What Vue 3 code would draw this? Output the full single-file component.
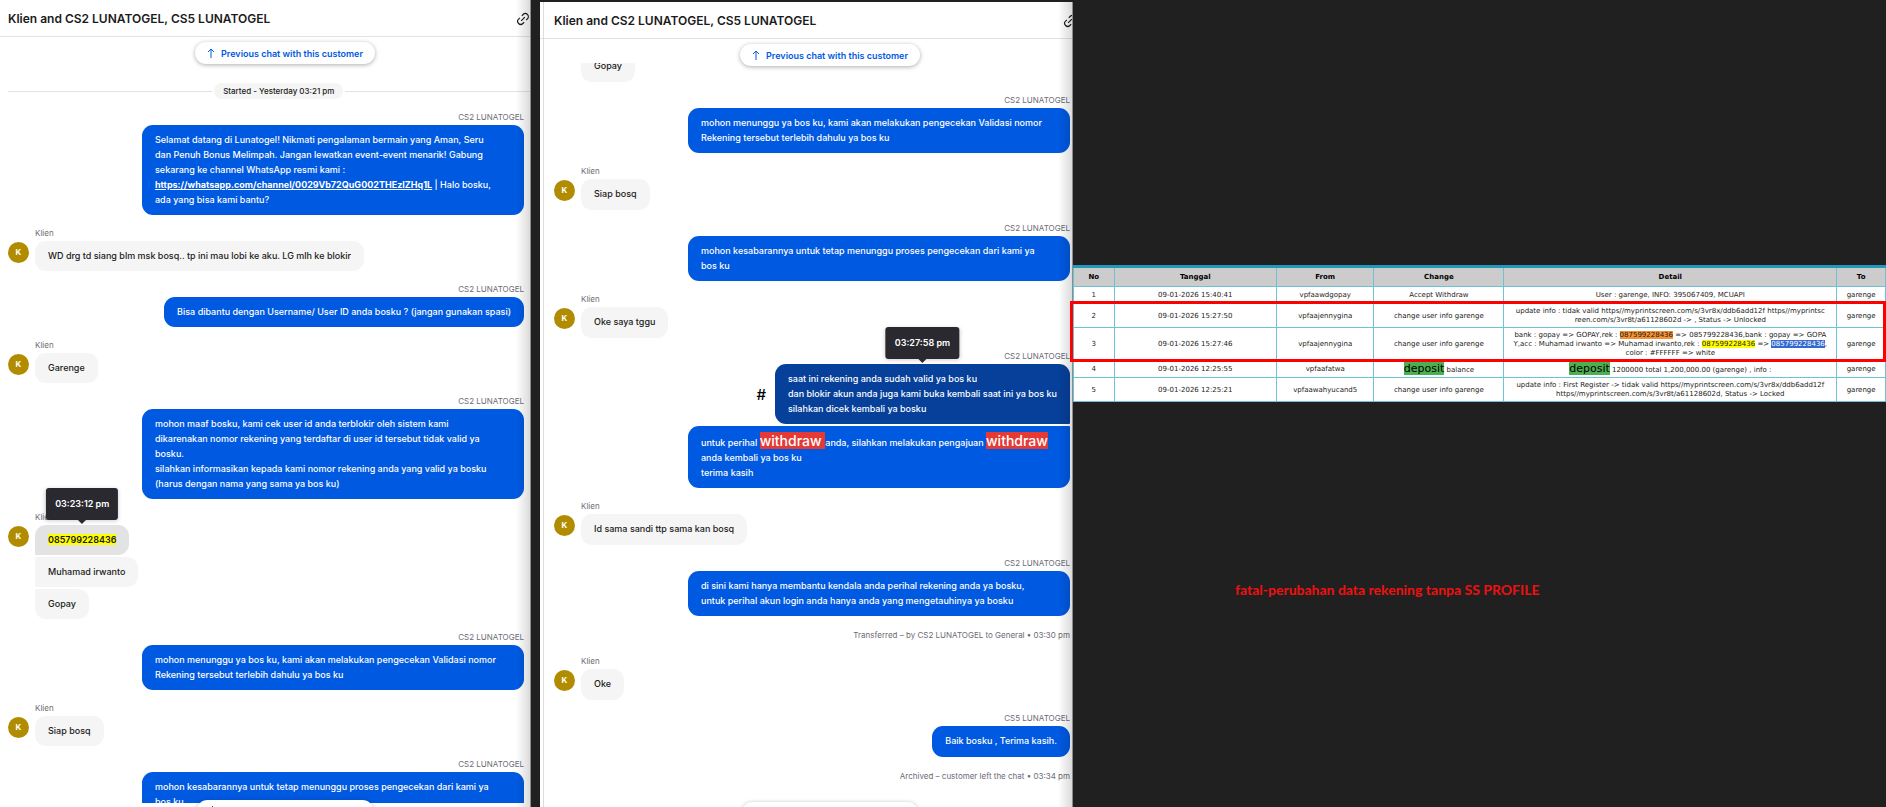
<script setup>
const conversations = [
  {
    id: 'left',
    title: 'Klien and CS2 LUNATOGEL, CS5 LUNATOGEL',
    started: 'Started - Yesterday 03:21 pm',
    items: [
      {
        from: 'agent',
        name: 'CS2 LUNATOGEL',
        bubbles: [
          {
            wide: true,
            parts: [
              { text: 'Selamat datang di Lunatogel! Nikmati pengalaman bermain yang Aman, Seru\ndan Penuh Bonus Melimpah. Jangan lewatkan event-event menarik! Gabung\nsekarang ke channel WhatsApp resmi kami :\n' },
              { text: 'https://whatsapp.com/channel/0029Vb72QuG002THEzIZHq1L', link: true },
              { text: ' | Halo bosku,\nada yang bisa kami bantu?' },
            ],
          },
        ],
      },
      { from: 'client', name: 'Klien', bubbles: [{ parts: [{ text: 'WD drg td siang blm msk bosq.. tp ini mau lobi ke aku. LG mlh ke blokir' }] }] },
      { from: 'agent', name: 'CS2 LUNATOGEL', bubbles: [{ parts: [{ text: 'Bisa dibantu dengan Username/ User ID anda bosku ? (jangan gunakan spasi)' }] }] },
      { from: 'client', name: 'Klien', bubbles: [{ parts: [{ text: 'Garenge' }] }] },
      {
        from: 'agent',
        name: 'CS2 LUNATOGEL',
        bubbles: [
          {
            wide: true,
            parts: [
              { text: 'mohon maaf bosku, kami cek user id anda terblokir oleh sistem kami\ndikarenakan nomor rekening yang terdaftar di user id tersebut tidak valid ya bosku.\nsilahkan informasikan kepada kami nomor rekening anda yang valid ya bosku (harus dengan nama yang sama ya bos ku)' },
            ],
          },
        ],
      },
      {
        from: 'client',
        name: 'Klien',
        bubbles: [
          { active: true, time: '03:23:12 pm', parts: [{ text: '085799228436', mark: 'number' }] },
          { parts: [{ text: 'Muhamad irwanto' }] },
          { parts: [{ text: 'Gopay' }] },
        ],
      },
      { from: 'agent', name: 'CS2 LUNATOGEL', bubbles: [{ wide: true, parts: [{ text: 'mohon menunggu ya bos ku, kami akan melakukan pengecekan Validasi nomor Rekening tersebut terlebih dahulu ya bos ku' }] }] },
      { from: 'client', name: 'Klien', bubbles: [{ parts: [{ text: 'Siap bosq' }] }] },
      { from: 'agent', name: 'CS2 LUNATOGEL', bubbles: [{ wide: true, parts: [{ text: 'mohon kesabarannya untuk tetap menunggu proses pengecekan dari kami ya bos ku' }] }] },
    ],
  },
  {
    id: 'right',
    title: 'Klien and CS2 LUNATOGEL, CS5 LUNATOGEL',
    items: [
      { from: 'client', cut: true, bubbles: [{ parts: [{ text: 'Gopay' }] }] },
      { from: 'agent', name: 'CS2 LUNATOGEL', bubbles: [{ wide: true, parts: [{ text: 'mohon menunggu ya bos ku, kami akan melakukan pengecekan Validasi nomor Rekening tersebut terlebih dahulu ya bos ku' }] }] },
      { from: 'client', name: 'Klien', bubbles: [{ parts: [{ text: 'Siap bosq' }] }] },
      { from: 'agent', name: 'CS2 LUNATOGEL', bubbles: [{ wide: true, parts: [{ text: 'mohon kesabarannya untuk tetap menunggu proses pengecekan dari kami ya bos ku' }] }] },
      { from: 'client', name: 'Klien', bubbles: [{ parts: [{ text: 'Oke saya tggu' }] }] },
      {
        from: 'agent',
        name: 'CS2 LUNATOGEL',
        bubbles: [
          {
            active: true,
            time: '03:27:58 pm',
            parts: [{ text: 'saat ini rekening anda sudah valid ya bos ku\ndan blokir akun anda juga kami buka kembali saat ini ya bos ku\nsilahkan dicek kembali ya bosku' }],
          },
          {
            wide: true,
            parts: [
              { text: 'untuk perihal ' },
              { text: 'withdraw ', mark: 'withdraw' },
              { text: 'anda, silahkan melakukan pengajuan ' },
              { text: 'withdraw', mark: 'withdraw' },
              { text: ' anda kembali ya bos ku\nterima kasih' },
            ],
          },
        ],
      },
      { from: 'client', name: 'Klien', bubbles: [{ parts: [{ text: 'Id sama sandi ttp sama kan bosq' }] }] },
      { from: 'agent', name: 'CS2 LUNATOGEL', bubbles: [{ wide: true, parts: [{ text: 'di sini kami hanya membantu kendala anda perihal rekening anda ya bosku,\nuntuk perihal akun login anda hanya anda yang mengetauhinya ya bosku' }] }] },
      { event: 'Transferred – by CS2 LUNATOGEL to General • 03:30 pm' },
      { from: 'client', name: 'Klien', bubbles: [{ parts: [{ text: 'Oke' }] }] },
      { from: 'agent', name: 'CS5 LUNATOGEL', bubbles: [{ parts: [{ text: 'Baik bosku , Terima kasih.' }] }] },
      { event: 'Archived – customer left the chat • 03:34 pm' },
    ],
  },
]

const columns = ['No', 'Tanggal', 'From', 'Change', 'Detail', 'To']

const rows = [
  {
    date: '09-01-2026 15:40:41',
    from: 'vpfaawdgopay',
    change: [{ text: 'Accept Withdraw' }],
    detail: [{ text: 'User : garenge, INFO: 395067409, MCUAPI' }],
  },
  {
    date: '09-01-2026 15:27:50',
    from: 'vpfaajennygina',
    change: [{ text: 'change user info garenge' }],
    detail: [{ text: 'update info : tidak valid https//myprintscreen.com/s/3vr8x/ddb6add12f https//myprintsc\nreen.com/s/3vr8t/a61128602d -> , Status -> Unlocked' }],
  },
  {
    date: '09-01-2026 15:27:46',
    from: 'vpfaajennygina',
    change: [{ text: 'change user info garenge' }],
    detail: [
      { text: 'bank : gopay => GOPAY,rek : ' },
      { text: '087599228436', mark: 'orange' },
      { text: ' => 085799228436,bank : gopay => GOPA\nY,acc : Muhamad irwanto => Muhamad irwanto,rek : ' },
      { text: '087599228436', mark: 'yellow' },
      { text: ' => ' },
      { text: '085799228436', mark: 'blue' },
      { text: ',\ncolor : #FFFFFF => white' },
    ],
  },
  {
    date: '09-01-2026 12:25:55',
    from: 'vpfaafatwa',
    change: [{ text: 'deposit', mark: 'deposit' }, { text: ' balance' }],
    detail: [{ text: 'deposit', mark: 'deposit' }, { text: ' 1200000 total 1,200,000.00 (garenge) , info :' }],
  },
  {
    date: '09-01-2026 12:25:21',
    from: 'vpfaawahyucand5',
    change: [{ text: 'change user info garenge' }],
    detail: [{ text: 'update info : First Register -> tidak valid https//myprintscreen.com/s/3vr8x/ddb6add12f\nhttps//myprintscreen.com/s/3vr8t/a61128602d, Status -> Locked' }],
  },
]
</script>

<template>
  <main class="board">
    <section v-for="chat in conversations" :key="chat.id" class="chat" :class="`chat--${chat.id}`">
      <header class="chat__header">
        <h1 class="chat__title">{{ chat.title }}</h1>
        <button class="chat__copy" type="button" aria-label="Copy link">
          <svg viewBox="0 0 24 24" width="14" height="14" fill="none" stroke="currentColor" stroke-width="2">
            <path d="M10 6.5l2.2-2.2a5.2 5.2 0 0 1 7.4 7.4L17.4 14M14 17.5l-2.2 2.2a5.2 5.2 0 0 1-7.4-7.4L6.600 10M8.800 15.200l6.400-6.400" />
          </svg>
        </button>
      </header>

      <button class="jump jump--top" type="button">
        <svg viewBox="0 0 8 10" width="8" height="10" fill="none" stroke="currentColor">
          <path d="M4 10V1M1 4l3-3 3 3" />
        </svg>
        Previous chat with this customer
      </button>

      <div class="chat__feed">
        <div v-if="chat.started" class="started"><span class="started__label">{{ chat.started }}</span></div>
        <template v-for="(item, i) in chat.items" :key="i">
          <p v-if="item.event" class="event">{{ item.event }}</p>
          <article v-else class="group" :class="[`group--${item.from}`, { 'group--cut': item.cut }]">
            <div v-if="item.name" class="group__name">{{ item.name }}</div>
            <div class="group__row">
              <span v-if="item.name" class="avatar">{{ item.from === 'client' ? 'K' : '' }}</span>
              <div class="group__bubbles">
                <div v-for="(bubble, b) in item.bubbles" :key="b" class="line">
                  <button v-if="bubble.active && item.from === 'agent'" class="line__tag" type="button" aria-label="Tag message">#</button>
                  <div class="bubble" :class="{ 'bubble--active': bubble.active, 'bubble--wide': bubble.wide }">
                    <template v-for="(part, p) in bubble.parts" :key="p"><a v-if="part.link" class="bubble__link" :href="part.text">{{ part.text }}</a><mark v-else-if="part.mark" :class="`mark--${part.mark}`">{{ part.text }}</mark><template v-else>{{ part.text }}</template></template>
                    <span v-if="bubble.time" class="tooltip">{{ bubble.time }}</span>
                  </div>
                </div>
              </div>
            </div>
          </article>
        </template>
      </div>

      <button class="jump jump--bottom" type="button" aria-label="Next chat with this customer">
        <svg viewBox="0 0 8 10" width="8" height="10" fill="none" stroke="currentColor">
          <path d="M4 0v9M1 6l3 3 3-3" />
        </svg>
      </button>
    </section>

    <section class="report">
      <div class="report__table">
        <table class="log">
          <thead>
            <tr>
              <th v-for="col in columns" :key="col" :class="`log__${col.toLowerCase()}`">{{ col }}</th>
            </tr>
          </thead>
          <tbody>
            <tr v-for="(row, r) in rows" :key="r">
              <td>{{ r + 1 }}</td>
              <td>{{ row.date }}</td>
              <td>{{ row.from }}</td>
              <td class="log__text"><template v-for="(part, p) in row.change" :key="p"><mark v-if="part.mark" :class="`mark--${part.mark}`">{{ part.text }}</mark><template v-else>{{ part.text }}</template></template></td>
              <td class="log__text"><template v-for="(part, p) in row.detail" :key="p"><mark v-if="part.mark" :class="`mark--${part.mark}`">{{ part.text }}</mark><template v-else>{{ part.text }}</template></template></td>
              <td>garenge</td>
            </tr>
          </tbody>
        </table>
        <div class="report__frame"></div>
      </div>
      <p class="report__note">fatal-perubahan data rekening tanpa SS PROFILE</p>
    </section>
  </main>
</template>

<style>
body {
  background: #202020;
}
</style>

<style scoped>
.board {
  display: flex;
  height: 100vh;
  overflow: hidden;
  background: #202020;
  font-family: Inter, "Liberation Sans", sans-serif;
  font-size: 9px;
  font-weight: 500;
  line-height: 15px;
  color: #1b1b20;
}

button {
  font: inherit;
  border: 0;
  padding: 0;
  background: none;
  cursor: pointer;
}

mark {
  color: inherit;
}

.chat {
  position: relative;
  display: flex;
  flex-direction: column;
  overflow: hidden;
  background: #fff;
}

.chat::after {
  content: "";
  position: absolute;
  inset: 0 0 0 auto;
  width: 14px;
  border-right: 1px solid #8c8c8c;
  background: linear-gradient(to right, transparent, rgba(0, 0, 0, 0.14));
  pointer-events: none;
}

.chat--left {
  flex: 531 0 0;
  margin-right: 9px;
}

.chat--right {
  flex: 533 0 0;
  margin-top: 2px;
}

.chat--right::before {
  content: "";
  position: absolute;
  inset: 0 auto 0 3px;
  width: 1px;
  background: #dcdcde;
}

.chat__header {
  display: flex;
  flex: none;
  align-items: center;
  justify-content: space-between;
  height: 35px;
  padding: 1px 0 0 8px;
  border-bottom: 1px solid #e2e2e4;
}

.chat--right .chat__header {
  padding-left: 14px;
}

.chat__title {
  margin: 0;
  font-size: 12px;
  font-weight: 600;
  line-height: 18px;
  white-space: nowrap;
}

.chat__copy {
  display: flex;
  flex: none;
  margin-right: 1px;
  color: #1b1b20;
}

.chat--right .chat__copy {
  margin-right: -4px;
}

.jump {
  position: absolute;
  z-index: 1;
  left: 285px;
  display: flex;
  align-items: center;
  height: 22px;
  padding: 0 12px;
  gap: 6px;
  transform: translateX(-50%);
  border-radius: 11px;
  background: #fff;
  box-shadow: 0 1px 4px rgba(19, 19, 23, 0.35);
  color: #0059e1;
  font-weight: 600;
  white-space: nowrap;
}

.chat--right .jump {
  left: 290px;
}

.jump--top {
  top: 42px;
}

.jump--bottom {
  top: calc(100vh - 7px);
  width: 177px;
}

.chat__feed {
  flex: 1;
  min-height: 0;
  margin-bottom: 4px;
  padding: 0 7px 0 8px;
  overflow: hidden;
}

.chat--left .chat__feed {
  margin-top: 46px;
}

.chat--right .chat__feed {
  margin-top: 24px;
  padding: 0 3px 0 14px;
}

.started {
  display: flex;
  align-items: center;
  gap: 2px;
  margin-right: -7px;
}

.started::before,
.started::after {
  content: "";
  flex: 1;
  height: 1px;
  background: #e2e2e4;
}

.started::before {
  flex-grow: 11;
}

.started::after {
  flex-grow: 10;
}

.started__label {
  padding: 1px 9px;
  border-radius: 8px;
  background: #f5f5f5;
  font-size: 8px;
  line-height: 14px;
}

.group {
  padding-top: 11px;
}

.group__name {
  padding-left: 27px;
  color: #6c6c75;
  font-size: 8px;
  font-weight: 400;
}

.group__row {
  display: flex;
  gap: 6px;
}

.avatar {
  flex: none;
  width: 21px;
  height: 21px;
  margin-top: 1px;
  border-radius: 50%;
  background: #b28c00;
  color: #fff;
  font-size: 8px;
  font-weight: 700;
  line-height: 21px;
  text-align: center;
}

.group__bubbles {
  display: flex;
  flex-direction: column;
  align-items: flex-start;
  gap: 2px;
}

.group--agent {
  display: flex;
  flex-direction: column;
  align-items: flex-end;
}

.group--agent .group__row {
  flex-direction: row-reverse;
  margin-right: -27px;
}

.group--agent .avatar {
  background: #8c2b2b;
}

.group--agent .group__bubbles {
  align-items: flex-end;
}

.group--cut {
  height: 19px;
  padding: 0 0 0 27px;
  display: flex;
  align-items: flex-end;
  overflow: hidden;
}

.line {
  display: flex;
  align-items: center;
  gap: 9px;
}

.line__tag {
  font-size: 15px;
}

.bubble {
  position: relative;
  padding: 7px 13px 8px;
  border-radius: 11px;
  background: #f5f5f5;
  white-space: pre-wrap;
}

.chat--right .bubble {
  min-height: 16px;
}

.bubble--wide {
  width: 348px;
  padding-right: 21px;
}

.group--client .line:not(:last-child) .bubble {
  border-bottom-left-radius: 1px;
}

.group--client .line:not(:first-child) .bubble {
  border-top-left-radius: 1px;
}

.group--agent .bubble {
  background: #0059e1;
  color: #fff;
}

.group--agent .line:not(:last-child) .bubble {
  border-bottom-right-radius: 1px;
}

.group--agent .line:not(:first-child) .bubble {
  border-top-right-radius: 1px;
}

.bubble--active {
  background: #e3e3e3;
}

.group--agent .bubble--active {
  background: #06409a;
}

.bubble__link {
  color: #fff;
  font-weight: 700;
}

.tooltip {
  position: absolute;
  z-index: 2;
  bottom: calc(100% + 5px);
  left: 50%;
  padding: 8px 9px 9px;
  transform: translateX(-50%);
  border-radius: 3px;
  background: #2a2930;
  box-shadow: 0 1px 4px rgba(19, 19, 23, 0.2);
  color: #fff;
  font-weight: 600;
  white-space: nowrap;
}

.tooltip::after {
  content: "";
  position: absolute;
  top: 100%;
  left: 50%;
  margin-left: -4px;
  border: 4px solid transparent;
  border-top-color: #2a2930;
  border-bottom: 0;
}

.event {
  margin: 0;
  padding-top: 12px;
  color: #6c6c75;
  font-size: 8px;
  font-weight: 400;
  text-align: right;
}

.mark--number {
  background: #ff0;
  color: #1b1b20;
  font-weight: 600;
}

.mark--withdraw {
  background: #e53935;
  font-size: 14px;
}

.report {
  display: flex;
  flex: 813 0 0;
  flex-direction: column;
  padding-top: 265px;
}

.report__table {
  position: relative;
}

.log {
  width: 100%;
  border-collapse: collapse;
  border-top: 3px solid #2299bb;
  table-layout: fixed;
  background: #fff;
  font-family: "DejaVu Sans", sans-serif;
  font-size: 7px;
  font-weight: 400;
  line-height: 9px;
  text-align: center;
}

.log th,
.log td {
  box-sizing: border-box;
  padding: 4px 1px 3px;
  border: 1px solid #6cc3d5;
}

.log th {
  padding: 5px 1px 4px;
  background: #ccc;
  color: #000;
}

.log .log__text {
  padding: 3px 1px 2px;
  white-space: pre;
}

.log__no {
  width: 5%;
}

.log__tanggal {
  width: 20%;
}

.log__from {
  width: 12%;
}

.log__change {
  width: 16%;
}

.log__to {
  width: 6%;
}

.mark--orange {
  background: #f79232;
}

.mark--yellow {
  background: #ff0;
}

.mark--blue {
  background: #3367d1;
  color: #fff;
}

.mark--deposit {
  background: #4caf50;
  color: #000;
  font-size: 11px;
}

.report__frame {
  position: absolute;
  top: 36px;
  right: 0;
  left: -3px;
  height: 55px;
  border: 3px solid #f00;
}

.report__note {
  margin: 179px 0 0 162px;
  color: #f01010;
  font-family: Lato, sans-serif;
  font-size: 14px;
  font-weight: 700;
  line-height: 18px;
}
</style>
